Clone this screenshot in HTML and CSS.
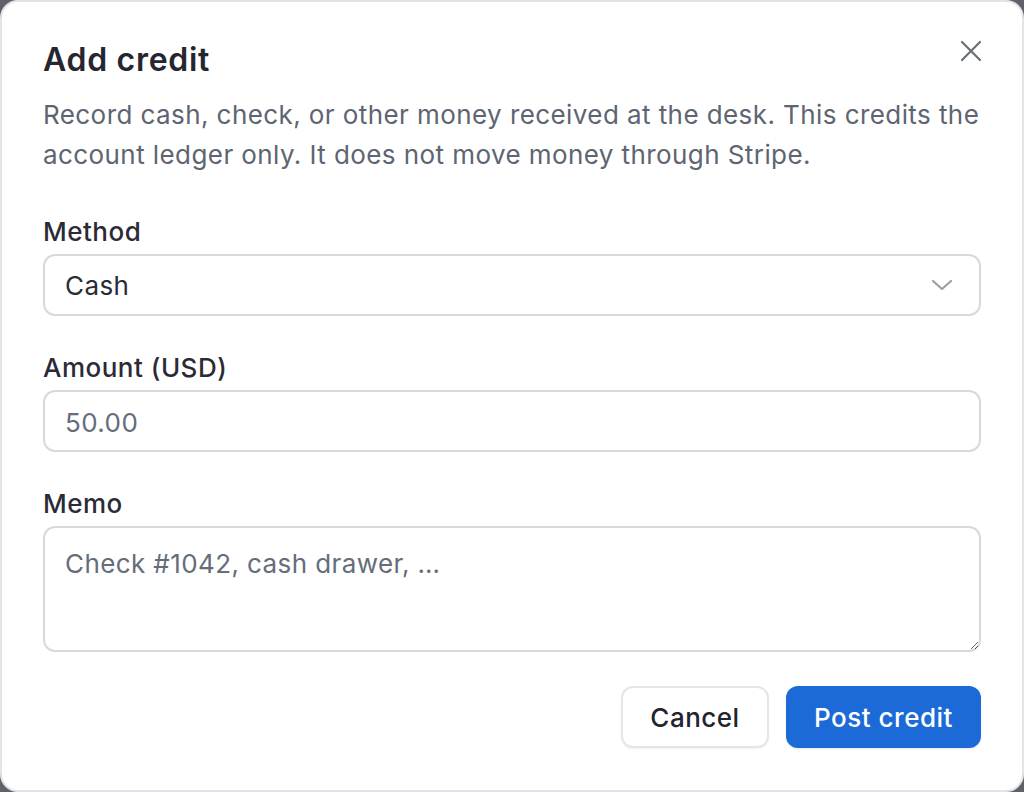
FILE: index.html
```html
<!DOCTYPE html>
<html lang="en">
<head>
<meta charset="utf-8">
<title>Add credit</title>
<link rel="stylesheet" href="styles.css">
</head>
<body>
<div class="dialog" role="dialog" aria-labelledby="dlg-title">
  <div class="head">
    <h2 id="dlg-title" class="title">Add credit</h2>
    <button class="close" type="button" aria-label="Close">
      <svg width="24" height="24" viewBox="0 0 24 24" fill="none" stroke="currentColor" stroke-width="2.2" stroke-linecap="round"><path d="M3 3 L21 21 M21 3 L3 21"/></svg>
    </button>
  </div>
  <p class="desc">Record cash, check, or other money received at the desk. This credits the account ledger only. It does not move money through Stripe.</p>
  <div class="fields">
    <div class="field">
      <label class="label" for="method">Method</label>
      <div class="select" id="method">
        <span class="select-value">Cash</span>
        <svg class="chev" width="22" height="14" viewBox="0 0 22 14" fill="none" stroke="currentColor" stroke-width="2.2" stroke-linecap="round" stroke-linejoin="round"><path d="M2 3 L11 11 L20 3"/></svg>
      </div>
    </div>
    <div class="field">
      <label class="label" for="amount">Amount (USD)</label>
      <input id="amount" class="input" type="text" placeholder="50.00">
    </div>
    <div class="field">
      <label class="label" for="memo">Memo</label>
      <textarea id="memo" class="textarea" placeholder="Check #1042, cash drawer, …"></textarea>
    </div>
  </div>
  <div class="actions">
    <button class="btn btn-secondary" type="button">Cancel</button>
    <button class="btn btn-primary" type="button">Post credit</button>
  </div>
</div>
</body>
</html>
```
FILE: styles.css
```css
* { box-sizing: border-box; }
html, body { margin: 0; padding: 0; }
body {
  background: #5f6167;
  font-family: Inter, "Noto Sans", "Liberation Sans", sans-serif;
  width: 1024px;
  height: 792px;
  overflow: hidden;
}
.dialog {
  width: 1024px;
  height: 792px;
  background: #ffffff;
  border: 2px solid #e3e4e8;
  border-radius: 18px;
  padding: 38px 41px 0 41px;
  display: flex;
  flex-direction: column;
}
.head {
  display: flex;
  justify-content: space-between;
  align-items: flex-start;
}
.title {
  margin: 0;
  font-size: 32px;
  line-height: 40px;
  font-weight: 600;
  color: #262631;
  letter-spacing: 0.7px;
}
.close {
  border: 0;
  background: none;
  padding: 0;
  margin: -1px -2px 0 0;
  color: #6b6f78;
  width: 24px;
  height: 24px;
  display: flex;
  cursor: pointer;
}
.desc {
  margin: 15px 0 0 0;
  font-size: 26px;
  line-height: 40px;
  color: #5d6572;
  letter-spacing: 0.42px;
}
.fields {
  margin-top: 41px;
  display: flex;
  flex-direction: column;
  gap: 36px;
}
.field {
  display: flex;
  flex-direction: column;
  gap: 6px;
}
.label {
  font-size: 26px;
  line-height: 32px;
  font-weight: 500;
  color: #2a2b36;
  letter-spacing: 0.5px;
}
.select, .input, .textarea {
  width: 100%;
  border: 2px solid #d7d9de;
  border-radius: 12px;
  background: #fff;
  font-family: inherit;
  font-size: 26px;
  letter-spacing: 0.4px;
}
.select {
  height: 62px;
  display: flex;
  align-items: center;
  justify-content: space-between;
  padding: 1px 26px 0 20px;
  color: #2a2b36;
}
.chev { color: #9a9ea6; margin-top: -1px; }
.input {
  height: 62px;
  padding: 3px 20px 0 20px;
  color: #2a2b36;
  outline: none;
}
.input::placeholder, .textarea::placeholder { color: #656d7a; opacity: 1; }
.textarea {
  height: 126px;
  padding: 16px 20px;
  line-height: 40px;
  color: #2a2b36;
  resize: vertical;
  outline: none;
  display: block;
}
.actions {
  margin-top: 34px;
  display: flex;
  justify-content: flex-end;
  gap: 17px;
}
.btn {
  height: 62px;
  border-radius: 12px;
  font-family: inherit;
  font-size: 26px;
  font-weight: 500;
  letter-spacing: 0.5px;
  cursor: pointer;
}
.btn-secondary {
  width: 148px;
  background: #fff;
  border: 2px solid #e5e6ea;
  color: #23232d;
  box-shadow: 0 1px 2px rgba(0,0,0,0.06);
}
.btn-primary {
  width: 195px;
  background: #1b6ad7;
  border: 0;
  color: #fff;
  box-shadow: 0 1px 2px rgba(0,0,0,0.1);
}
```
